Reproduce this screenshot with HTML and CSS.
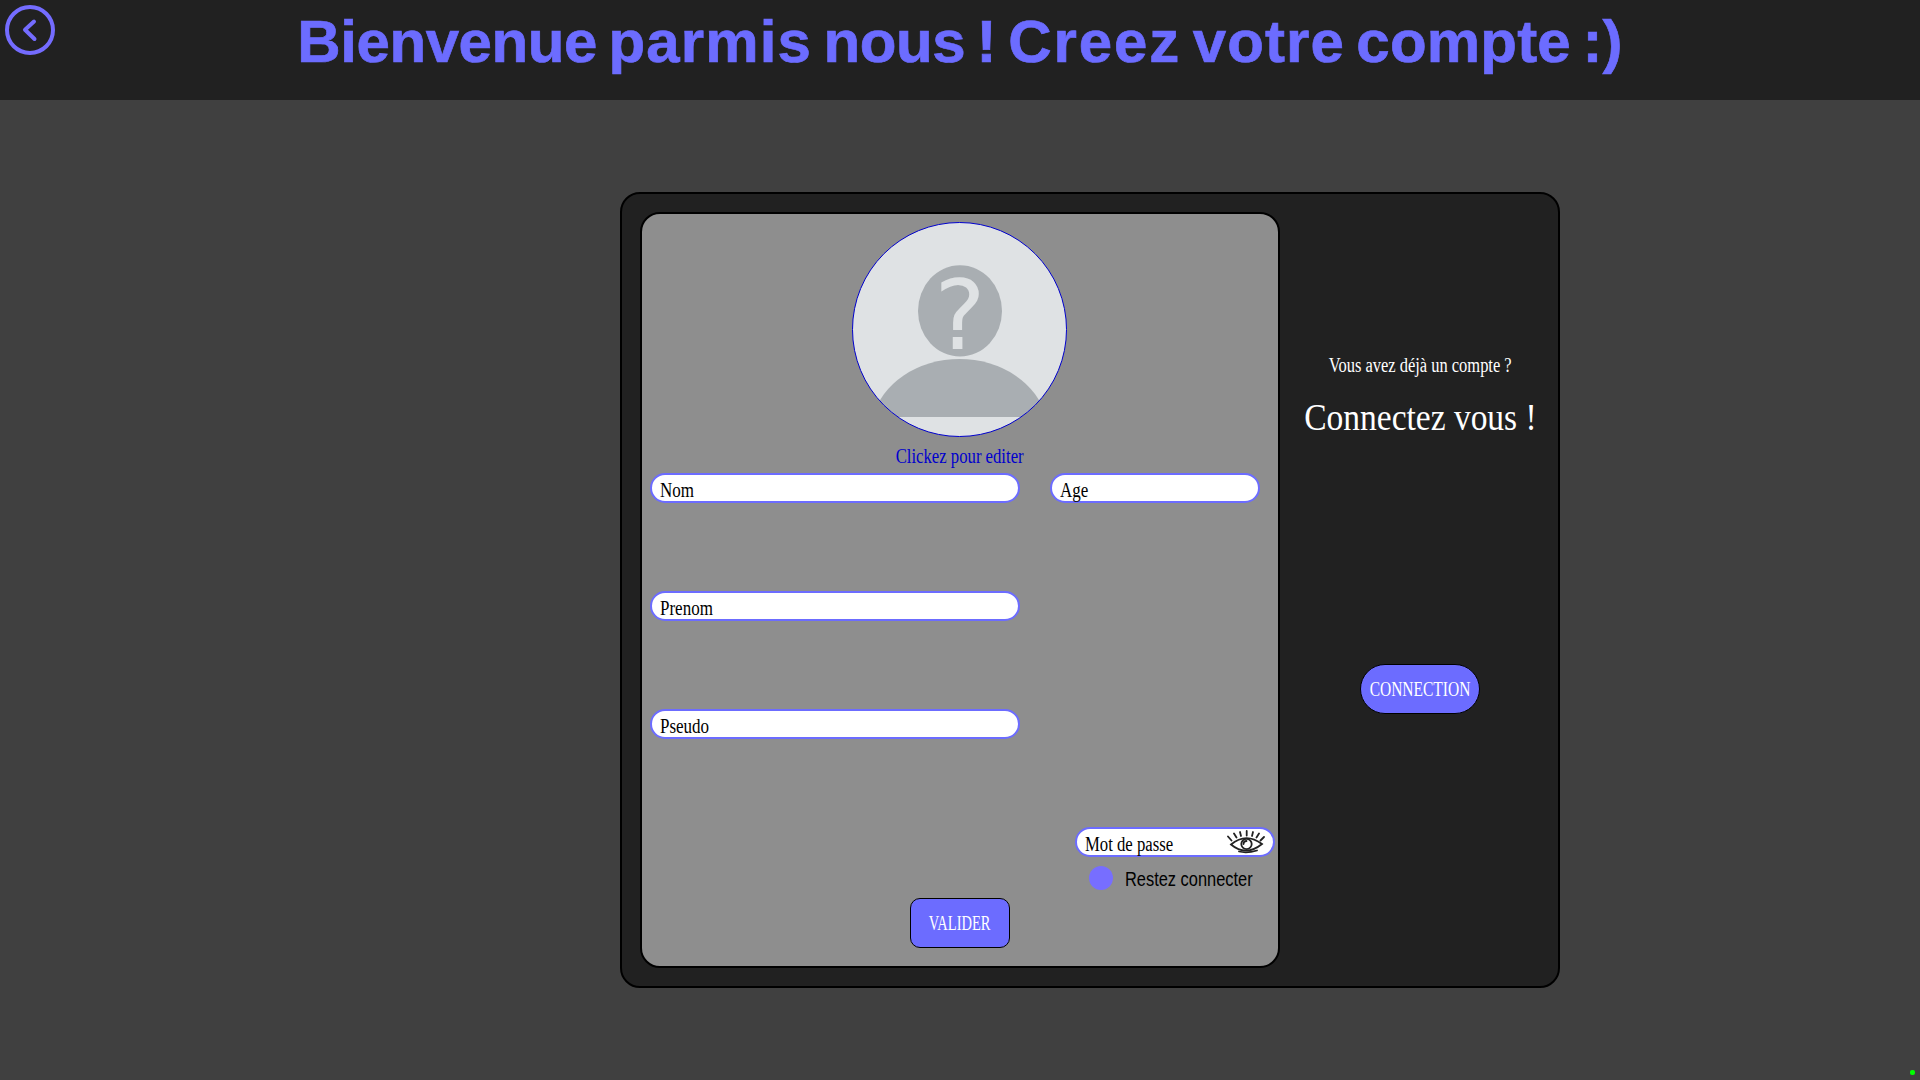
FILE: index.html
```html
<!DOCTYPE html>
<html lang="fr">
<head>
<meta charset="utf-8">
<title>Creation de compte</title>
<link rel="stylesheet" href="styles.css">
</head>
<body>
<header class="topbar">
  <svg class="back" viewBox="0 0 50 50" role="button" aria-label="Retour"><circle cx="25" cy="25" r="23"/><path d="M29 16.500 20 24.800l9.500 9.200"/></svg>
  <h1 class="title"><span class="fit"><span class="tight">Bienvenue</span> <span class="loose">parmis</span> <span class="tight">nous</span> ! <span class="wide">Creez</span> <span class="loose">votre</span> compte :)</span></h1>
</header>
<main class="stage">
  <section class="card">
    <form class="panel">
      <svg class="avatar" viewBox="0 0 215 215">
        <defs><clipPath id="disc"><circle cx="107.500" cy="107.500" r="107"/></clipPath></defs>
        <g clip-path="url(#disc)">
          <rect width="215" height="215" fill="#dfe2e4"/>
          <ellipse cx="108" cy="88.900" rx="42" ry="45.700" fill="#a9aeb2"/>
          <path d="M21.200 195a88 72 0 0 1 172.600 0z" fill="#a9aeb2"/>
          <text class="mark" x="108" y="126.500" text-anchor="middle">?</text>
        </g>
        <circle cx="107.500" cy="107.500" r="107" fill="none" stroke="#0000cd"/>
      </svg>
      <p class="edit"><span class="fit">Clickez pour editer</span></p>
      <div class="fields">
        <div class="field"><span class="fit">Nom</span></div>
        <div class="field age"><span class="fit">Age</span></div>
        <div class="field"><span class="fit">Prenom</span></div>
        <div class="field pseudo"><span class="fit">Pseudo</span></div>
      </div>
      <div class="field password"><span class="fit">Mot de passe</span>
        <svg class="eye" viewBox="0 0 38 24"><path d="M4 14.500Q19 2 35 14Q19 27 4 14.500z"/><circle cx="19.500" cy="14" r="5.200"/><path d="M16.500 14q0-3 3-3M12 21.500q8 2 18-1M1 6.500l3.500 4M7 3.500l2.500 4M13 2l1 4M19.700 1v4.500M26 2l-1 4M32 3.500l-2.500 4M37 7l-3.500 3.500"/></svg>
      </div>
      <div class="stay"><i class="dot"></i><span class="fit">Restez connecter</span></div>
      <div class="button validate"><span class="fit">VALIDER</span></div>
    </form>
    <aside class="login">
      <p class="question"><span class="fit">Vous avez déjà un compte ?</span></p>
      <p class="invite"><span class="fit">Connectez vous !</span></p>
      <div class="button connect"><span class="fit">CONNECTION</span></div>
    </aside>
  </section>
</main>
<i class="status"></i>
</body>
</html>
```
FILE: styles.css
```css
* { box-sizing: border-box; }
body {
  margin: 0;
  width: 1920px;
  height: 1080px;
  overflow: hidden;
  background: #404040;
  font: 20px/24px "Liberation Serif", serif;
  color: #000;
}
p, h1 { margin: 0; }
.fit { display: inline-block; white-space: nowrap; }

.topbar {
  height: 100px;
  padding: 5px;
  display: grid;
  grid-template-columns: 50px 1fr 50px;
  background: #212121;
}
.back { width: 50px; height: 50px; fill: none; stroke: #746cff; stroke-width: 4; stroke-linecap: round; stroke-linejoin: round; }
.title {
  display: flex;
  justify-content: center;
  padding-top: 2px;
  font: bold 60px/70px "Liberation Sans", sans-serif;
  letter-spacing: .2px;
  word-spacing: -5.4px;
  -webkit-text-stroke: .7px #6c6cff;
  color: #6c6cff;
}
.tight { letter-spacing: -.4px; }
.loose { letter-spacing: 1.1px; }
.wide { letter-spacing: 1.9px; }

.stage { padding: 92px 0 0 620px; }
.card {
  width: 940px;
  height: 796px;
  padding: 18px;
  display: flex;
  border: 2px solid #000;
  border-radius: 20px;
  background: #212121;
}
.panel {
  width: 640px;
  height: 756px;
  padding: 8px 3px 0 8px;
  flex: none;
  display: flex;
  flex-direction: column;
  border: 2px solid #000;
  border-radius: 20px;
  background: #8e8e8e;
}
.avatar { width: 215px; height: 215px; margin-left: 202px; flex: none; }
.mark { font: 96px "DejaVu Sans", sans-serif; fill: #dfe2e4; }
.edit { height: 24px; margin: 7px 0 5px; padding-right: 5px; text-align: center; color: #0000cd; }
.fields {
  display: grid;
  grid-template-columns: 370px 210px;
  grid-auto-rows: 30px;
  gap: 88px 30px;
}
.field {
  height: 30px;
  padding: 3px 0 0 8px;
  border: 2px solid #6c6cff;
  border-radius: 15px;
  background: #fff;
}
.field .fit { transform-origin: 0 0; transform: scaleX(.85); }
.pseudo { grid-column: 1; }
.password { width: 200px; margin-top: 88px; align-self: flex-end; display: flex; justify-content: space-between; padding: 0 8px; }
.password .fit { padding-top: 3px; transform: scaleX(.835); }
.eye { width: 38px; height: 24px; margin-top: 1px; flex: none; fill: none; stroke: #222; stroke-width: 1.8; stroke-linecap: round; }
.stay { height: 24px; margin: 9px 0 0 439px; display: flex; gap: 12px; font-family: "Liberation Sans", sans-serif; line-height: 27px; }
.stay .fit { transform-origin: 0 0; transform: scaleX(.82); }
.dot { width: 24px; height: 24px; flex: none; border-radius: 50%; background: #776eff; }
.button {
  display: flex;
  justify-content: center;
  align-items: center;
  border: 1px solid #000;
  background: #6c6cff;
  color: #fff;
}
.validate { width: 100px; height: 50px; margin: 8px 0 0 260px; border-radius: 10px; }
.login { width: 280px; margin-right: -20px; flex: none; display: flex; flex-direction: column; align-items: center; color: #fff; }
.question { margin-top: 141px; }
.invite { margin-top: 19px; font-size: 37px; line-height: 44px; }
.connect { width: 120px; height: 50px; margin-top: 224px; border-radius: 25px; }
.question .fit { transform: scaleX(.823); }
.invite .fit { transform: scaleX(.905); }
.edit .fit { transform: scaleX(.835); }
.validate .fit { transform: scaleX(.725); }
.connect .fit { transform: scaleX(.775); }

/* connection indicator floating above the page corner */
.status { position: absolute; right: 5px; bottom: 5px; width: 5px; height: 5px; border-radius: 2px; background: #0f0; }
```
